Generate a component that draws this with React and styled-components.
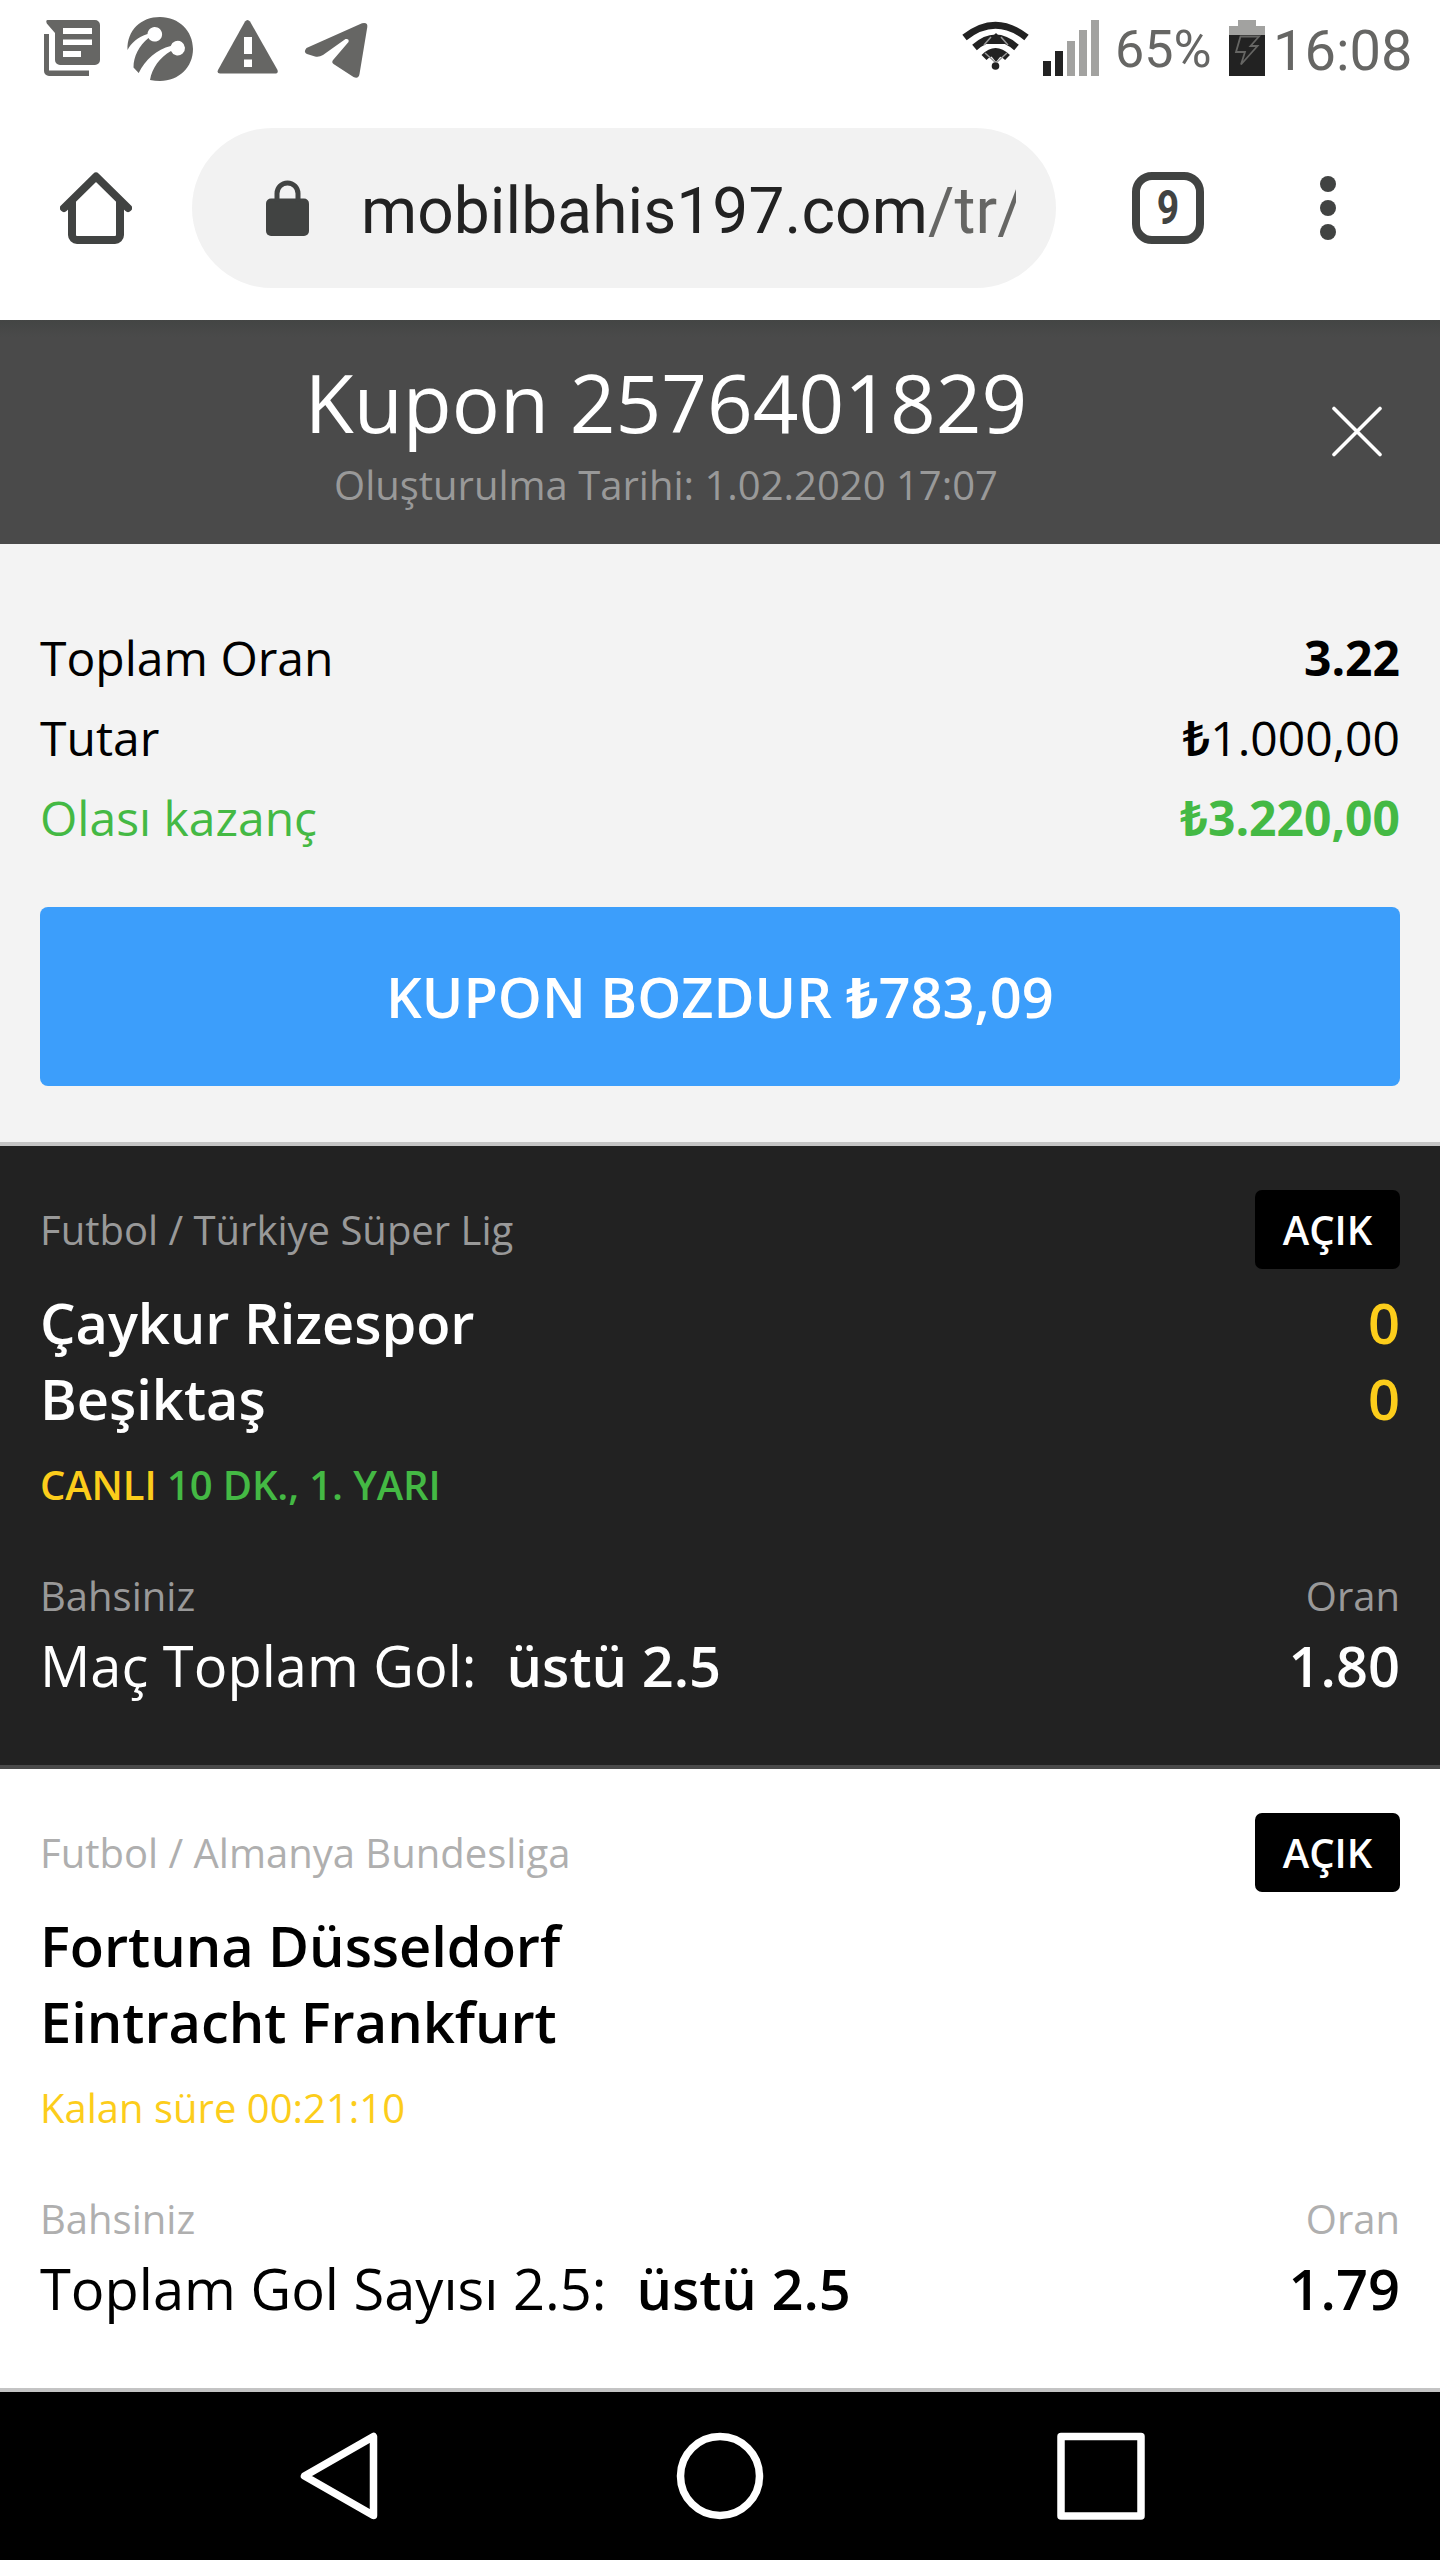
import React from 'react';
import styled, { createGlobalStyle } from 'styled-components';

const GlobalStyle = createGlobalStyle`
	body {
		margin:0;
		background-color:#fff;
	}
	svg {
		display:block;
		flex:none;
	}
`;

const Screen = styled.div`
	width:1440px;
	height:2560px;
	display:flex;
	flex-direction:column;
	overflow:hidden;
	font-family:"Open Sans", "Noto Sans", sans-serif;
	background-color:#fff;
`;

/* phone status bar */
const StatusBar = styled.div`
	height:96px;
	display:flex;
	justify-content:space-between;
	font-family:Roboto, sans-serif;
	color:#666664;
`;

const StatusGroup = styled.div`
	display:flex;
`;

const StatusIcon = styled.div`
	margin-left:${props => props.$gap}px;
`;

const BatteryLevel = styled.span`
	width:98px;
	margin-left:16px;
	font-size:52px;
	line-height:100px;
`;

const Clock = styled.span`
	width:167px;
	margin-left:8px;
	font-size:56px;
	line-height:102px;
`;

/* browser toolbar */
const Toolbar = styled.div`
	height:224px;
	display:flex;
	align-items:center;
	box-sizing:border-box;
	padding:0 104px 0 60px;
`;

const AddressBar = styled.div`
	width:864px;
	height:160px;
	margin:0 76px 0 60px;
	box-sizing:border-box;
	padding:0 40px 0 74px;
	display:flex;
	align-items:center;
	border-radius:80px;
	background-color:#f2f2f2;
`;

const Url = styled.div`
	width:655px;
	margin-left:52px;
	padding-top:7px;
	overflow:hidden;
	white-space:nowrap;
	font-family:Roboto, sans-serif;
	font-size:64px;
	line-height:84px;
	letter-spacing:.1px;
	color:#222;
	span {
		color:#666664;
	}
`;

const TabCount = styled.div`
	width:72px;
	height:72px;
	margin-right:116px;
	box-sizing:border-box;
	border:8px solid #414342;
	border-radius:20px;
	display:flex;
	align-items:center;
	justify-content:center;
	font-family:Roboto, sans-serif;
	font-weight:700;
	font-size:49px;
	line-height:56px;
	color:#414342;
	span {
		transform:scaleX(.8);
	}
`;

/* coupon header */
const Header = styled.header`
	height:224px;
	display:flex;
	box-sizing:border-box;
	background:linear-gradient(#434544, #4a4a4a 17px);
`;

const HeaderText = styled.div`
	width:1332px;
	padding-top:34px;
	text-align:center;
`;

const Title = styled.h1`
	margin:0;
	font-weight:400;
	font-size:80px;
	line-height:96px;
	color:#fff;
`;

const Created = styled.div`
	margin-top:5px;
	font-size:40px;
	line-height:60px;
	color:#999;
`;

const CloseButton = styled.button`
	width:50px;
	height:51px;
	margin-top:86px;
	padding:0;
	border:0;
	background:none;
`;

/* totals */
const Summary = styled.section`
	height:602px;
	box-sizing:border-box;
	padding:74px 40px 56px;
	border-bottom:4px solid #c4c4c4;
	background-color:#f3f3f3;
`;

const Row = styled.div`
	display:flex;
	justify-content:space-between;
`;

const TotalRow = styled(Row)`
	font-size:48px;
	line-height:80px;
	color:${props => props.$win ? '#44b944' : '#000'};
`;

const Amount = styled.span`
	font-weight:${props => props.$bold ? 700 : 400};
`;

const Lira = styled.span`
	font-weight:${props => props.$weight || 700};
`;

const CashoutButton = styled.button`
	display:block;
	width:1360px;
	height:179px;
	margin-top:49px;
	padding:0 0 2px;
	border:0;
	border-radius:8px;
	font-family:inherit;
	font-weight:600;
	font-size:56px;
	line-height:80px;
	color:#fff;
	background-color:#3c9efb;
`;

/* one bet of the coupon */
const Card = styled.section`
	height:623px;
	box-sizing:border-box;
	padding:44px 40px 0;
	color:${props => props.$dark ? '#fff' : '#000'};
	background-color:${props => props.$dark ? '#222' : '#fff'};
	border-bottom:4px solid ${props => props.$dark ? '#4a4a4a' : '#c4c4c4'};
`;

const League = styled.span`
	font-size:40px;
	line-height:80px;
	color:${props => props.$dark ? '#999' : '#afafaf'};
`;

const Badge = styled.span`
	width:145px;
	height:79px;
	border-radius:7px;
	text-align:center;
	font-weight:600;
	font-size:40px;
	line-height:80px;
	color:#fff;
	background-color:#000;
`;

const Teams = styled.div`
	margin-top:14px;
	height:152px;
`;

const Team = styled(Row)`
	font-weight:600;
	font-size:56px;
	line-height:76px;
	letter-spacing:-.05px;
`;

const Score = styled.span`
	color:#fccd1b;
`;

const MatchState = styled.div`
	margin-top:21px;
	font-size:40px;
	line-height:56px;
	font-weight:${props => props.$live ? 600 : 400};
	letter-spacing:${props => props.$live ? '-.1px' : 'normal'};
	color:#fccd1b;
	span {
		color:#44b944;
	}
`;

const Labels = styled(Row)`
	margin-top:55px;
	font-size:40px;
	line-height:56px;
	color:${props => props.$dark ? '#999' : '#afafaf'};
`;

const Bet = styled(Row)`
	margin-top:3px;
	font-size:56px;
	line-height:76px;
	b {
		font-weight:600;
	}
`;

const Pick = styled.b`
	margin-left:30px;
`;

/* android keys */
const NavBar = styled.nav`
	height:168px;
	background-color:#000;
`;

const bets = [
	{
		league:'Futbol / Türkiye Süper Lig',
		teams:['Çaykur Rizespor', 'Beşiktaş'],
		scores:['0', '0'],
		clock:'10 DK., 1. YARI',
		market:'Maç Toplam Gol:',
		pick:'üstü 2.5',
		odds:'1.80',
	},
	{
		league:'Futbol / Almanya Bundesliga',
		teams:['Fortuna Düsseldorf', 'Eintracht Frankfurt'],
		startsIn:'Kalan süre 00:21:10',
		market:'Toplam Gol Sayısı 2.5:',
		pick:'üstü 2.5',
		odds:'1.79',
	},
];

const NotificationIcons = () => (
	<svg width="400" height="96" viewBox="0 0 400 96" fill="#666664">
		<path d="M47.500 20H95a5 5 0 0 1 5 5V60a5 5 0 0 1-5 5H60a5 5 0 0 1-5-5V33L46.800 23.500Q45.500 20 47.500 20Z" />
		<path d="M44 34h5v36.500h40v5.500H49a5 5 0 0 1-5-5z" />
		<path fill="#fff" d="M63 28h29v6H63zM63 39.500h29v5.500H63zM63 51h18v6H63z" />
		<path d="M127.500 50C127 30 141 17 160 17C179 17 193 31 193 49C193 67 179 81 160 81Q155 81 150 80C152 68 160 57 171 51A7.300 7.300 0 1 0 170.700 46C157 49 145 60 138.700 73L133.500 67.500C133.500 56 139 46 148.500 38A7.300 7.300 0 1 0 147.500 34C138 37 131 43 127.500 50Z" />
		<path d="M245 21.500Q247.500 18.500 250 21.500L277.500 70Q278.500 73.500 275 73.500H220Q216.500 73.500 218 70Z" />
		<path fill="#fff" d="M244 37h8v17h-8zM244 59.500h8V67h-8z" />
		<path d="M362 23.300Q368 22 367.300 27L359.500 74Q358.500 79.500 353.500 77L333.500 64Q331 62 333.500 59.500L348.500 42Q349.500 38.500 345.500 39L323 55Q319 57.500 315 56.500L307 54Q303 52 306.500 48Z" />
	</svg>
);

const WifiIcon = () => (
	<svg width="68" height="96" viewBox="962 0 68 96" fill="none" stroke="#222" strokeWidth="7">
		<path d="M964.500 37.500Q995.500 13 1026.500 37.500" />
		<path d="M974.500 47.500Q995.500 29 1016.500 47.500" />
		<path d="M984 57.500Q995.500 46 1007.500 57.500" />
		<path fill="#222" stroke="none" d="M985 44L996 33L1007 44ZM988 52H1004L996 62Z" />
		<path stroke="#999" strokeWidth="1.500" d="M984 45L991 37M1008 45L1001 37M985 53L995 62M1007 53L997 62" />
		<circle cx="995.500" cy="66" r="3.800" fill="#222" stroke="none" />
	</svg>
);

const SignalIcon = () => (
	<svg width="56" height="96" viewBox="1043 0 56 96">
		<path fill="#222" d="M1043 61h8v15h-8zM1055 51h8v25h-8z" />
		<path fill="#a2a2a0" d="M1067 41h8v35h-8zM1079 30h8v46h-8zM1091 20h8v56h-8z" />
	</svg>
);

const BatteryIcon = () => (
	<svg width="36" height="96" viewBox="1229 0 36 96">
		<path fill="#a2a2a0" d="M1238 20h18v6h9v9h-36v-9h9z" />
		<path fill="#222" d="M1229 35h36v41h-36z" />
		<path fill="none" stroke="#666664" strokeWidth="1.800" d="M1240.500 36.500h18.500l-8.500 9.500h7l-16.500 18.500l4-12.500h-9z" />
	</svg>
);

const HomeIcon = () => (
	<svg width="72" height="72" viewBox="60 172 72 72" fill="none" stroke="#414342" strokeWidth="8" strokeLinecap="round" strokeLinejoin="round">
		<path d="M64 208L96 176.500L128 208" />
		<path d="M72 202V235a5 5 0 0 0 5 5H115a5 5 0 0 0 5-5V202" />
	</svg>
);

const LockIcon = () => (
	<svg width="43" height="56" viewBox="266.500 178.500 43 56">
		<rect x="266.500" y="197" width="43" height="37.500" rx="5" fill="#414342" />
		<path d="M277.500 200V192a10.500 10.500 0 0 1 21 0V200" fill="none" stroke="#414342" strokeWidth="5" />
	</svg>
);

const MenuIcon = () => (
	<svg width="16" height="64" viewBox="0 0 16 64" fill="#414342">
		<circle cx="8" cy="8" r="8" />
		<circle cx="8" cy="32" r="8" />
		<circle cx="8" cy="56" r="8" />
	</svg>
);

const CloseIcon = () => (
	<svg width="50" height="51" viewBox="0 0 50 51" stroke="#fff" strokeWidth="3.600" strokeLinecap="round">
		<path d="M2 2.500L48 48.500M48 2.500L2 48.500" />
	</svg>
);

const NavIcons = () => (
	<svg width="1440" height="168" viewBox="0 0 1440 168" fill="none" stroke="#fff" strokeWidth="7.500" strokeLinejoin="round">
		<path d="M304.500 84L373.500 44.500V123.500Z" />
		<circle cx="720" cy="84" r="39.500" />
		<rect x="1061" y="44.500" width="80" height="79.500" />
	</svg>
);

const BetCard = ({ bet, dark }) => (
	<Card $dark={dark}>
		<Row>
			<League $dark={dark}>{bet.league}</League>
			<Badge>AÇIK</Badge>
		</Row>
		<Teams>
			{bet.teams.map((team, i) => (
				<Team key={team}>
					<span>{team}</span>
					{bet.scores && <Score>{bet.scores[i]}</Score>}
				</Team>
			))}
		</Teams>
		{bet.clock
			? <MatchState $live>CANLI <span>{bet.clock}</span></MatchState>
			: <MatchState>{bet.startsIn}</MatchState>}
		<Labels $dark={dark}>
			<span>Bahsiniz</span>
			<span>Oran</span>
		</Labels>
		<Bet>
			<span>{bet.market}<Pick>{bet.pick}</Pick></span>
			<b>{bet.odds}</b>
		</Bet>
	</Card>
);

export default function App() {
	return (
		<Screen>
			<GlobalStyle />
			<StatusBar>
				<NotificationIcons />
				<StatusGroup>
					<WifiIcon />
					<StatusIcon $gap={13}><SignalIcon /></StatusIcon>
					<BatteryLevel>65%</BatteryLevel>
					<StatusIcon $gap={16}><BatteryIcon /></StatusIcon>
					<Clock>16:08</Clock>
				</StatusGroup>
			</StatusBar>
			<Toolbar>
				<HomeIcon />
				<AddressBar>
					<LockIcon />
					<Url>mobilbahis197.com<span>/tr/</span></Url>
				</AddressBar>
				<TabCount><span>9</span></TabCount>
				<MenuIcon />
			</Toolbar>
			<Header>
				<HeaderText>
					<Title>Kupon 2576401829</Title>
					<Created>Oluşturulma Tarihi: 1.02.2020 17:07</Created>
				</HeaderText>
				<CloseButton><CloseIcon /></CloseButton>
			</Header>
			<Summary>
				<TotalRow>
					<span>Toplam Oran</span>
					<Amount $bold>3.22</Amount>
				</TotalRow>
				<TotalRow>
					<span>Tutar</span>
					<Amount><Lira $weight={600}>₺</Lira>1.000,00</Amount>
				</TotalRow>
				<TotalRow $win>
					<span>Olası kazanç</span>
					<Amount $bold><Lira>₺</Lira>3.220,00</Amount>
				</TotalRow>
				<CashoutButton>KUPON BOZDUR <Lira>₺</Lira>783,09</CashoutButton>
			</Summary>
			<BetCard bet={bets[0]} dark />
			<BetCard bet={bets[1]} />
			<NavBar>
				<NavIcons />
			</NavBar>
		</Screen>
	);
}
